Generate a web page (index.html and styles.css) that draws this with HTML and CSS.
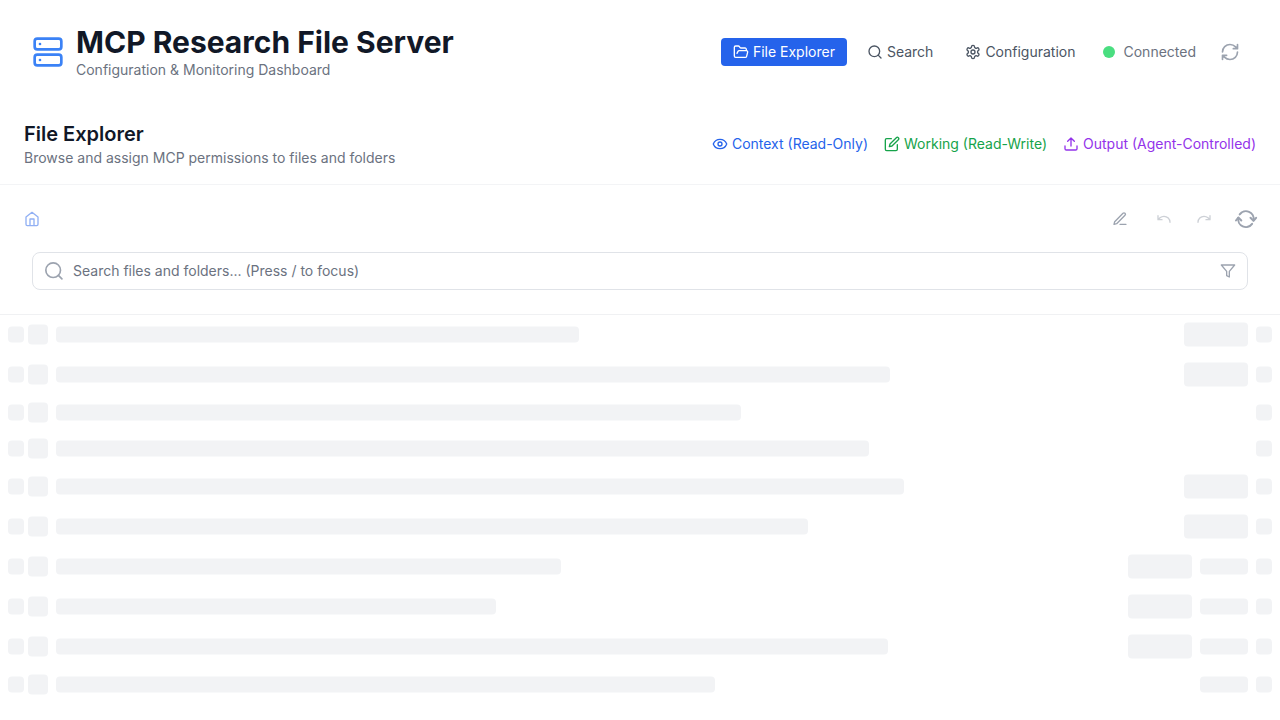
FILE: index.html
```
<!DOCTYPE html>
<html lang="en">
<head>
<meta charset="utf-8">
<title>MCP Research File Server</title>
<link rel="stylesheet" href="styles.css">
</head>
<body>
<header class="topbar">
  <div class="brand">
    <svg class="brand-icon" viewBox="0 0 24 24"><rect x="2" y="2" width="20" height="8" rx="2"/><rect x="2" y="14" width="20" height="8" rx="2"/><path d="M6 6h.01M6 18h.01"/></svg>
    <div>
      <h1 class="title">MCP Research File Server</h1>
      <p class="subtitle">Configuration &amp; Monitoring Dashboard</p>
    </div>
  </div>
  <div class="top-actions">
    <nav class="nav">
      <a class="tab active"><svg class="icon" viewBox="0 0 24 24"><path d="m6 14 1.5-2.9A2 2 0 0 1 9.24 10H20a2 2 0 0 1 1.94 2.5l-1.54 6a2 2 0 0 1-1.95 1.5H4a2 2 0 0 1-2-2V5a2 2 0 0 1 2-2h3.9a2 2 0 0 1 1.69.9l.81 1.2a2 2 0 0 0 1.67.9H18a2 2 0 0 1 2 2v2"/></svg>File Explorer</a>
      <a class="tab"><svg class="icon" viewBox="0 0 24 24"><circle cx="11" cy="11" r="8"/><path d="m21 21-4.3-4.3"/></svg>Search</a>
      <a class="tab"><svg class="icon" viewBox="0 0 24 24"><path d="M12.22 2h-.44a2 2 0 0 0-2 2v.18a2 2 0 0 1-1 1.73l-.43.25a2 2 0 0 1-2 0l-.15-.08a2 2 0 0 0-2.73.73l-.22.38a2 2 0 0 0 .73 2.73l.15.1a2 2 0 0 1 1 1.72v.51a2 2 0 0 1-1 1.74l-.15.09a2 2 0 0 0-.73 2.73l.22.38a2 2 0 0 0 2.73.73l.15-.08a2 2 0 0 1 2 0l.43.25a2 2 0 0 1 1 1.73V20a2 2 0 0 0 2 2h.44a2 2 0 0 0 2-2v-.18a2 2 0 0 1 1-1.73l.43-.25a2 2 0 0 1 2 0l.15.08a2 2 0 0 0 2.73-.73l.22-.39a2 2 0 0 0-.73-2.73l-.15-.08a2 2 0 0 1-1-1.74v-.5a2 2 0 0 1 1-1.74l.15-.09a2 2 0 0 0 .73-2.73l-.22-.38a2 2 0 0 0-2.73-.73l-.15.08a2 2 0 0 1-2 0l-.43-.25a2 2 0 0 1-1-1.73V4a2 2 0 0 0-2-2z"/><circle cx="12" cy="12" r="3"/></svg>Configuration</a>
    </nav>
    <div class="status"><span class="dot"></span>Connected</div>
    <button class="plain refresh" aria-label="Refresh"><svg class="refresh-icon" viewBox="0 0 24 24"><path d="M3 12a9 9 0 0 1 9-9 9.75 9.75 0 0 1 6.74 2.74L21 8M21 3v5h-5M21 12a9 9 0 0 1-9 9 9.75 9.75 0 0 1-6.74-2.74L3 16M8 16H3v5"/></svg></button>
  </div>
</header>
<main>
  <section class="section-head">
    <div>
      <h2 class="heading">File Explorer</h2>
      <p class="subtitle">Browse and assign MCP permissions to files and folders</p>
    </div>
    <div class="legend">
      <span class="key blue"><svg class="icon" viewBox="0 0 24 24"><path d="M2.06 12.35a1 1 0 0 1 0-.7 10.75 10.75 0 0 1 19.88 0 1 1 0 0 1 0 .7 10.75 10.75 0 0 1-19.88 0"/><circle cx="12" cy="12" r="3"/></svg>Context (Read-Only)</span>
      <span class="key green"><svg class="icon edit" viewBox="0 0 24 24"><path d="M11 4H4a2 2 0 0 0-2 2v14a2 2 0 0 0 2 2h14a2 2 0 0 0 2-2v-7"/><path d="M18.5 2.5a2.12 2.12 0 0 1 3 3L12 15l-4 1 1-4z"/></svg>Working (Read-Write)</span>
      <span class="key purple"><svg class="icon" viewBox="0 0 24 24"><path d="M21 15v4a2 2 0 0 1-2 2H5a2 2 0 0 1-2-2v-4M17 8l-5-5-5 5M12 3v12"/></svg>Output (Agent-Controlled)</span>
    </div>
  </section>
  <section class="tools">
    <div class="toolbar">
      <svg class="icon home" viewBox="0 0 24 24"><path d="m3 9 9-7 9 7v11a2 2 0 0 1-2 2H5a2 2 0 0 1-2-2zM9 22V12h6v10"/></svg>
      <div class="edit-actions">
        <svg class="icon pen" viewBox="0 0 24 24"><path d="M12 20h9M16.5 3.5a2.12 2.12 0 0 1 3 3L7 19l-4 1 1-4z"/></svg>
        <svg class="icon faded" viewBox="0 0 24 24"><path d="M3 7v6h6M21 17a9 9 0 0 0-9-9 9 9 0 0 0-6 2.3L3 13"/></svg>
        <svg class="icon faded" viewBox="0 0 24 24"><path d="M21 7v6h-6M3 17a9 9 0 0 1 9-9 9 9 0 0 1 6 2.3l3 2.7"/></svg>
        <svg class="sync" viewBox="0 0 24 24"><path d="M4.3 10.8a7.7 7.7 0 0 0 13.8 6M5.7 7.4a7.7 7.7 0 0 1 13.8 6"/><path d="m2 13.5 2.3-3 3 3M16.5 10.8l3 3 2.6-3"/></svg>
      </div>
    </div>
    <div class="search">
      <svg class="search-icon" viewBox="0 0 24 24"><circle cx="11" cy="11" r="8.8"/><path d="m21.5 21.5-4.2-4.2"/></svg>
      <span class="placeholder">Search files and folders... (Press / to focus)</span>
      <svg class="icon" viewBox="0 0 24 24"><path d="M22 3H2l8 9.46V19l4 2v-8.54z"/></svg>
    </div>
  </section>
  <section class="rows">
    <div class="row"><i class="sk small"></i><i class="sk file"></i><i class="sk bar" style="width:522.7px"></i><i class="sk badge"></i><i class="sk small"></i></div>
    <div class="row"><i class="sk small"></i><i class="sk file"></i><i class="sk bar" style="width:834px"></i><i class="sk badge"></i><i class="sk small"></i></div>
    <div class="row"><i class="sk small"></i><i class="sk file"></i><i class="sk bar" style="width:685px"></i><i class="sk small"></i></div>
    <div class="row"><i class="sk small"></i><i class="sk file"></i><i class="sk bar" style="width:813px"></i><i class="sk small"></i></div>
    <div class="row"><i class="sk small"></i><i class="sk file"></i><i class="sk bar" style="width:848px"></i><i class="sk badge"></i><i class="sk small"></i></div>
    <div class="row"><i class="sk small"></i><i class="sk file"></i><i class="sk bar" style="width:751.5px"></i><i class="sk badge"></i><i class="sk small"></i></div>
    <div class="row"><i class="sk small"></i><i class="sk file"></i><i class="sk bar" style="width:505px"></i><i class="sk badge"></i><i class="sk size"></i><i class="sk small"></i></div>
    <div class="row"><i class="sk small"></i><i class="sk file"></i><i class="sk bar" style="width:440px"></i><i class="sk badge"></i><i class="sk size"></i><i class="sk small"></i></div>
    <div class="row"><i class="sk small"></i><i class="sk file"></i><i class="sk bar" style="width:832px"></i><i class="sk badge"></i><i class="sk size"></i><i class="sk small"></i></div>
    <div class="row"><i class="sk small"></i><i class="sk file"></i><i class="sk bar" style="width:659px"></i><i class="sk size"></i><i class="sk small"></i></div>
  </section>
</main>
</body>
</html>
```

FILE: styles.css
```
* { box-sizing: border-box; }
body { margin: 0; height: 720px; overflow: hidden; background: #fff; color: #6b7280; font: 14px/20px Inter, sans-serif; }
h1, h2, p { margin: 0; }
svg { display: block; flex: none; fill: none; stroke: currentColor; stroke-width: 2; stroke-linecap: round; stroke-linejoin: round; }
.icon { width: 16px; height: 16px; }
.topbar { height: 104px; padding: 0 32px; display: flex; justify-content: space-between; align-items: center; }
.brand { display: flex; align-items: center; gap: 12px; }
.brand-icon { width: 32px; height: 32px; color: #3b82f6; }
.title { font-size: 30px; line-height: 36px; font-weight: 700; color: #111827; }
.top-actions, .nav, .status { display: flex; align-items: center; }
.tab { height: 28px; padding: 0 12px; display: flex; align-items: center; gap: 4px; border-radius: 4px; color: #4b5563; }
.nav { gap: 8px; }
.active { background: #2563eb; color: #fff; }
.status { gap: 8px; margin-left: 16px; }
.dot { width: 12px; height: 12px; border-radius: 50%; background: #4ade80; }
.plain { border: 0; padding: 0; background: none; }
.refresh { margin: 0 8px 0 24px; color: #9ca3af; }
.refresh-icon { width: 20px; height: 20px; }
.section-head { height: 80px; padding: 0 24px; display: flex; align-items: center; justify-content: space-between; }
.heading { font-size: 20px; line-height: 28px; font-weight: 600; color: #111827; }
.legend { display: flex; gap: 16px; }
.key { display: flex; align-items: center; gap: 4px; }
.blue { color: #2563eb; }
.green { color: #16a34a; }
.purple { color: #9333ea; }
.tools { height: 131px; border-top: 1px solid #f3f4f6; border-bottom: 1px solid #f0f1f3; }
.toolbar { height: 67.4px; padding: 0 22px 0 24px; display: flex; align-items: center; justify-content: space-between; }
.home { color: #2563eb; opacity: .5; }
.edit-actions { display: flex; align-items: center; gap: 24px; color: #9ca3af; }
.pen { margin-right: 4px; }
.faded { opacity: .5; }
.sync { width: 24px; height: 24px; margin-left: -2px; }
.search { height: 38px; margin: 0 32px; padding: 0 11px; display: flex; align-items: center; gap: 9px; border: 1px solid #e0e3e8; border-radius: 8px; color: #9ca3af; }
.search-icon { width: 20px; height: 20px; }
.placeholder { flex: 1; color: #6b7280; }
.rows { transform: translateY(-.4px); }
.row { display: flex; align-items: center; gap: 8px; padding: 8px; }
.sk { flex: none; display: block; height: 16px; border-radius: 4px; background: #f2f3f5; }
.small { width: 16px; }
.file { width: 20px; height: 20px; margin-left: -4px; }
.bar { margin-right: auto; }
.badge { width: 64px; height: 24px; }
.size { width: 48px; }
```
